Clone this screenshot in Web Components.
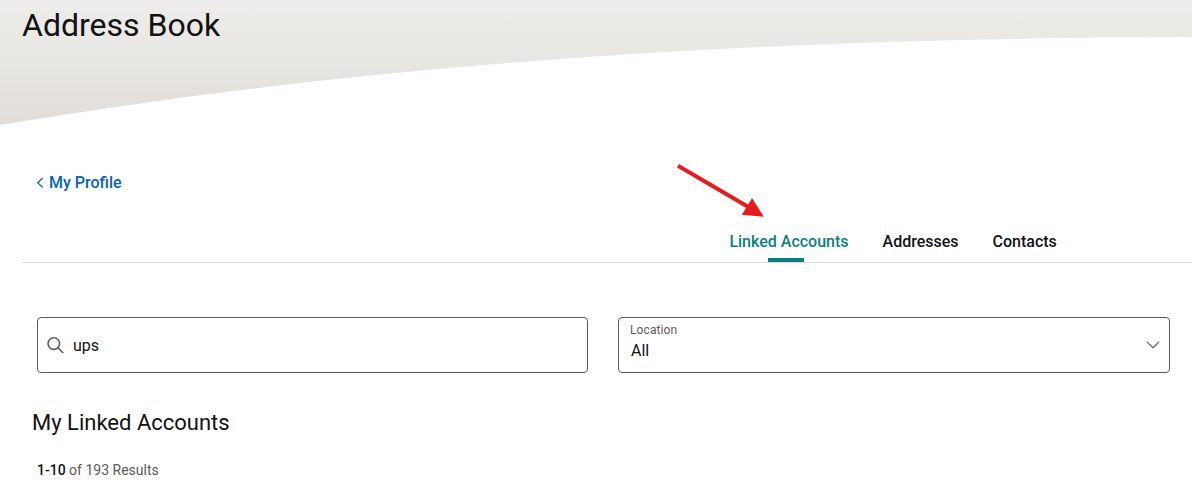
<!DOCTYPE html>
<html lang="en">
<head>
<meta charset="utf-8">
<title>Address Book</title>
<style>
    body {
        margin: 0;
        background: #fff;
        color: #121212;
        font-family: Roboto, "Liberation Sans", sans-serif;
        font-size: 16px;
        overflow: hidden;
    }
</style>
</head>
<body>
<address-book-page></address-book-page>

<script>
/**
 * Base class which stamps the static template of an element into its shadow
 * root.
 */
class BaseElement extends HTMLElement {
    constructor() {
        super();

        this.attachShadow({mode: "open"});
        this.shadowRoot.innerHTML = this.constructor.template;
    }
}

/**
 * Page title on top of a curved gradient background.
 */
class PageBanner extends BaseElement {
    static get template() {
        return `
            <style>
                :host {
                    display: grid;
                    height: 165px;
                }

                svg, h1 {
                    grid-area: 1 / 1;
                }

                svg {
                    display: block;
                }

                h1 {
                    margin: 6px 0 0 22px;
                    font-size: 32px;
                    font-weight: 400;
                    line-height: 38px;
                    z-index: 1;
                }
            </style>
            <svg width="1192" height="126" viewBox="0 0 1192 126">
                <defs>
                    <linearGradient id="fade" gradientUnits="userSpaceOnUse" x1="0" y1="0" x2="0" y2="126">
                        <stop offset="0" stop-color="#eeedeb"/>
                        <stop offset="0.5" stop-color="#e7e6e2"/>
                        <stop offset="1" stop-color="#e1dcd8"/>
                    </linearGradient>
                </defs>
                <path fill="url(#fade)" d="M0 0H1192V37C794.7 38.2 397.3 58.2 0 125Z"/>
            </svg>
            <h1><slot></slot></h1>
        `;
    }
}

/**
 * Link with a chevron that leads to the parent page.
 */
class BackLink extends BaseElement {
    static get template() {
        return `
            <style>
                :host {
                    display: flex;
                    align-items: center;
                    gap: 5px;
                    height: 35px;
                    padding-left: 36px;
                    color: #0662bb;
                    font-weight: 500;
                }
            </style>
            <svg width="8" height="12" viewBox="0 0 8 12" fill="none" stroke="currentColor" stroke-width="1.2">
                <path d="M6.7 1L1.7 5.7L6.7 10.5"/>
            </svg>
            <span><slot></slot></span>
        `;
    }
}

/**
 * One tab. The "selected" attribute gives it the active look.
 */
class NavTab extends BaseElement {
    static get template() {
        return `
            <style>
                :host {
                    display: flex;
                    flex-direction: column;
                    justify-content: space-between;
                    height: 30px;
                    font-weight: 500;
                    line-height: 20px;
                }

                i {
                    width: 36px;
                    height: 4px;
                    margin-left: 38.6px;
                }

                :host([selected]) {
                    color: #0a8080;
                }

                :host([selected]) i {
                    background: #0a8080;
                }
            </style>
            <span><slot></slot></span>
            <i></i>
        `;
    }
}

class NavTabs extends BaseElement {
    static get template() {
        return `
            <style>
                :host {
                    display: flex;
                    align-items: flex-end;
                    gap: 34px;
                    height: 62px;
                    margin-left: 22px;
                    padding-left: 707.4px;
                    border-bottom: 1px solid #dbdbdb;
                }
            </style>
            <slot></slot>
        `;
    }
}

class SearchField extends BaseElement {
    static get template() {
        return `
            <style>
                :host {
                    display: flex;
                    align-items: center;
                    gap: 9px;
                    box-sizing: border-box;
                    height: 56px;
                    padding-left: 9px;
                    border: 1px solid #5f5753;
                    border-radius: 4px;
                }
            </style>
            <svg width="17" height="17" viewBox="0 0 17 17" fill="none" stroke="#5f5753" stroke-width="1.6">
                <circle cx="6.8" cy="6.6" r="5.8"/>
                <path d="M11 10.8L16.2 16"/>
            </svg>
            <span><slot></slot></span>
        `;
    }
}

/**
 * Closed dropdown with a small label over its value.
 */
class SelectField extends BaseElement {
    static get observedAttributes() {
        return ["label"];
    }

    static get template() {
        return `
            <style>
                :host {
                    display: flex;
                    align-items: center;
                    justify-content: space-between;
                    box-sizing: border-box;
                    height: 56px;
                    padding: 0 9px 0 11px;
                    border: 1px solid #5f5753;
                    border-radius: 4px;
                }

                .text {
                    display: flex;
                    flex-direction: column;
                    gap: 3px;
                    padding-bottom: 7px;
                }

                label {
                    color: #5f5753;
                    font-size: 12px;
                    line-height: 16px;
                    letter-spacing: 0.1px;
                }

                .value {
                    padding-left: 1px;
                    line-height: 20px;
                }
            </style>
            <div class="text">
                <label></label>
                <span class="value"><slot></slot></span>
            </div>
            <svg width="14" height="8" viewBox="0 0 14 8" fill="none" stroke="#77706d" stroke-width="1.4">
                <path d="M1 1L7 6.7L13 1"/>
            </svg>
        `;
    }

    attributeChangedCallback(name, oldValue, newValue) {
        this.shadowRoot.querySelector("label").textContent = newValue;
    }
}

/**
 * Section heading with the result count under it.
 */
class ResultsHeader extends BaseElement {
    static get template() {
        return `
            <style>
                :host {
                    display: block;
                    padding: 36px 0 0 32px;
                }

                h2 {
                    margin: 0;
                    font-size: 22px;
                    font-weight: 400;
                    line-height: 28px;
                }

                p {
                    margin: 23px 0 0 5px;
                    color: #5f5753;
                    font-size: 14px;
                    line-height: 20px;
                }

                ::slotted(b) {
                    color: #121212;
                    font-weight: 500;
                }
            </style>
            <h2><slot name="title"></slot></h2>
            <p><slot></slot></p>
        `;
    }
}

/**
 * Red arrow that points at whatever lies under it.
 */
class PointerArrow extends BaseElement {
    static get template() {
        return `
            <style>
                :host {
                    position: absolute;
                    left: 674px;
                    top: 160px;
                }

                svg {
                    display: block;
                }
            </style>
            <svg width="92" height="60" viewBox="674 160 92 60" fill="#e81c1c">
                <path d="M679 163.9L748.2 204.6L752.1 198L763.7 216.7L741.7 214.8L746.1 208.1L677 167.4Z"/>
            </svg>
        `;
    }
}

class AddressBookPage extends BaseElement {
    static get template() {
        return `
            <style>
                :host {
                    display: block;
                }

                .filters {
                    display: grid;
                    grid-template-columns: 551px 552px;
                    gap: 30px;
                    padding: 54px 0 0 37px;
                }
            </style>
            <page-banner>Address Book</page-banner>
            <back-link>My Profile</back-link>
            <nav-tabs>
                <nav-tab selected>Linked Accounts</nav-tab>
                <nav-tab>Addresses</nav-tab>
                <nav-tab>Contacts</nav-tab>
            </nav-tabs>
            <div class="filters">
                <search-field>ups</search-field>
                <select-field label="Location">All</select-field>
            </div>
            <results-header>
                <span slot="title">My Linked Accounts</span>
                <b>1-10</b> of 193 Results
            </results-header>
            <pointer-arrow></pointer-arrow>
        `;
    }
}

customElements.define("page-banner", PageBanner);
customElements.define("back-link", BackLink);
customElements.define("nav-tab", NavTab);
customElements.define("nav-tabs", NavTabs);
customElements.define("search-field", SearchField);
customElements.define("select-field", SelectField);
customElements.define("results-header", ResultsHeader);
customElements.define("pointer-arrow", PointerArrow);
customElements.define("address-book-page", AddressBookPage);
</script>
</body>
</html>
